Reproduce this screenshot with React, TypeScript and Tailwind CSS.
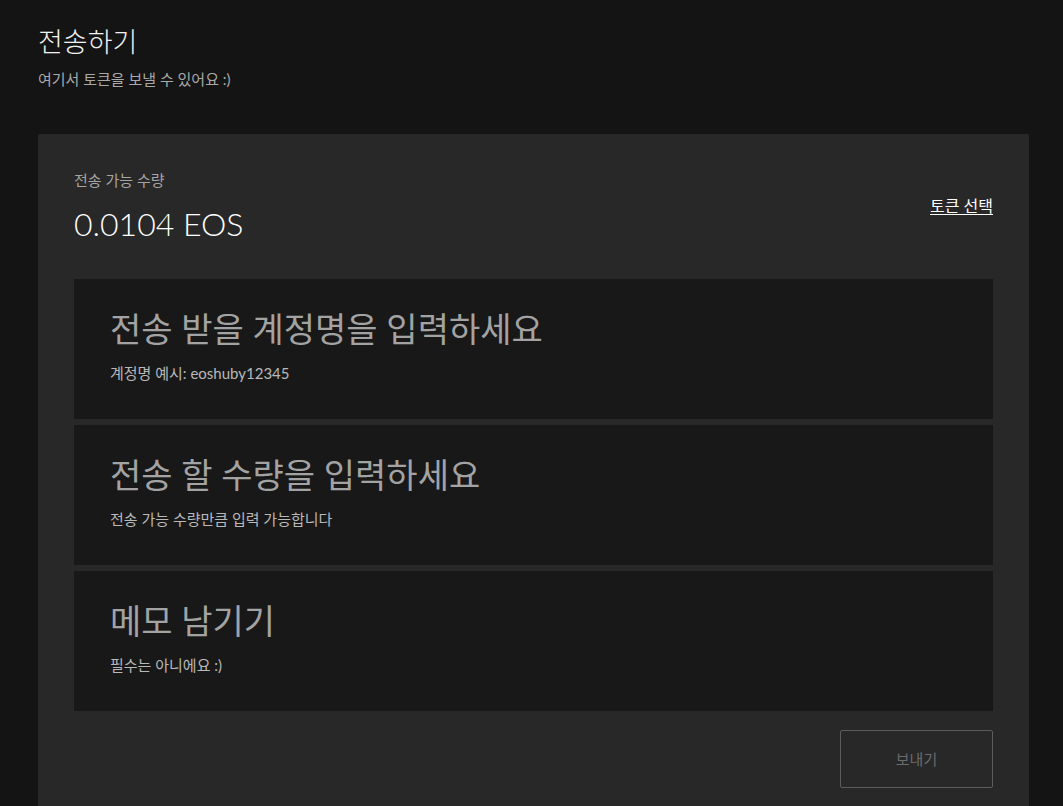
const fieldFont = { fontFamily: "Lato, 'Noto Sans CJK KR', sans-serif" };

type Field = { placeholder: string; hint: string };

const fields: Field[] = [
  { placeholder: '전송 받을 계정명을 입력하세요', hint: '계정명 예시: eoshuby12345' },
  { placeholder: '전송 할 수량을 입력하세요', hint: '전송 가능 수량만큼 입력 가능합니다' },
  { placeholder: '메모 남기기', hint: '필수는 아니에요 :)' },
];

const InputBox = ({ placeholder, hint }: Field) => (
  <div className="bg-[#181818] h-[140px] px-9 pt-[26px]">
    <input
      type="text"
      placeholder={placeholder}
      className="w-full bg-transparent outline-none text-[34px] leading-[48px] text-white placeholder:text-[#a3a3a3]"
      style={fieldFont}
    />
    <p className="mt-[10px] text-[15px] leading-5 text-[#b9b9b9]">{hint}</p>
  </div>
);

export default function App() {
  return (
    <div
      className="min-h-screen bg-[#141414] text-white px-[38px] pt-[26px]"
      style={fieldFont}
    >
      {/* Header */}
      <h1 className="text-[27px] leading-8 font-light text-[#f2f2f2]">전송하기</h1>
      <p className="mt-[11px] text-[15px] leading-5 text-[#a9a9a9]">여기서 토큰을 보낼 수 있어요 :)</p>

      {/* Card */}
      <div className="mt-[45px] w-[991px] bg-[#282828] rounded-[2px] px-9 pt-9 pb-9">
        <div className="flex items-start justify-between">
          <div>
            <p className="text-[15px] leading-5 text-[#a5a5a5]">전송 가능 수량</p>
            <p className="mt-[14px] text-[32px] leading-10 font-light text-white">0.0104 EOS</p>
          </div>
          <button className="mt-[26px] text-[16px] leading-5 text-white underline underline-offset-2">
            토큰 선택
          </button>
        </div>

        <div className="mt-[35px] flex flex-col gap-[6px]">
          {fields.map((f) => (
            <InputBox key={f.placeholder} {...f} />
          ))}
        </div>

        <div className="mt-[19px] flex justify-end">
          <button
            disabled
            className="w-[153px] h-[58px] border border-[#5c5c5c] rounded-[2px] text-[15px] text-[#6b6b6b]"
          >
            보내기
          </button>
        </div>
      </div>
    </div>
  );
}
